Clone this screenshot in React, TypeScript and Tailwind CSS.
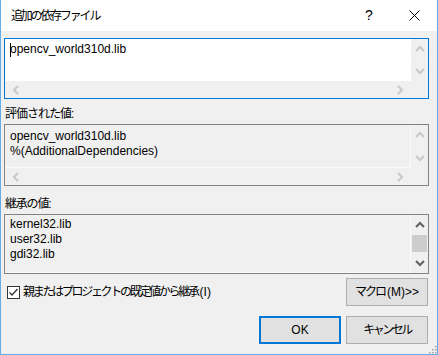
import type { ReactNode } from 'react';

const jp = "font-['Liberation_Sans','Noto_Sans_CJK_JP',sans-serif]";

function Chevron({ dir, color }: { dir: 'up' | 'down' | 'left' | 'right'; color: string }) {
  const paths: Record<string, string> = {
    up: 'M1 6 L5 2 L9 6',
    down: 'M1 2 L5 6 L9 2',
    left: 'M6 1 L2 5 L6 9',
    right: 'M2 1 L6 5 L2 9',
  };
  const vertical = dir === 'up' || dir === 'down';
  return (
    <svg width={vertical ? 10 : 8} height={vertical ? 8 : 10} viewBox={vertical ? '0 0 10 8' : '0 0 8 10'}>
      <path d={paths[dir]} fill="none" stroke={color} strokeWidth="2" />
    </svg>
  );
}

function Box({
  border,
  bg,
  lines,
  hscroll,
  arrow,
  thumb,
  pt,
  caret,
}: {
  border: string;
  bg: string;
  lines: string[];
  hscroll: boolean;
  arrow: string;
  thumb?: boolean;
  pt: string;
  caret?: boolean;
}) {
  return (
    <div className={`flex flex-col border ${border} h-full`}>
      <div className="flex flex-1 min-h-0">
        <div className={`flex-1 ${bg} ${pt} pl-[5px] text-[12px] leading-[15px] text-black font-['Liberation_Sans',sans-serif] ${bg === 'bg-white' ? '' : 'border-r border-b border-[#fafafa]'}`}>
          {lines.map((l, i) => (
            <div key={i} className="flex items-center">
              {caret && i === 0 && <span className="inline-block w-px h-[14px] bg-black -mr-px" />}
              <span>{l}</span>
            </div>
          ))}
        </div>
        <div className="w-[17px] bg-[#f0f0f0] flex flex-col items-center justify-between py-[6px]">
          <Chevron dir="up" color={arrow} />
          {thumb && <div className="w-[15px] h-[17px] bg-[#cdcdcd] -mt-[2px]" />}
          <Chevron dir="down" color={arrow} />
        </div>
      </div>
      {hscroll && (
        <div className="h-[17px] flex">
          <div className="flex-1 bg-[#f0f0f0] flex items-center justify-between px-[7px]">
            <Chevron dir="left" color={arrow} />
            <Chevron dir="right" color={arrow} />
          </div>
          <div className="w-[17px] bg-[#f0f0f0]" />
        </div>
      )}
    </div>
  );
}

function Button({ children, focused }: { children: ReactNode; focused?: boolean }) {
  return (
    <div
      className={`w-[82px] h-[28px] flex items-center justify-center bg-[#e1e1e1] text-[12px] text-black ${jp} ${
        focused ? 'border-2 border-[#0078d7]' : 'border border-[#adadad]'
      }`}
    >
      {children}
    </div>
  );
}

export default function App() {
  return (
    <div className="w-[438px] h-[355px] flex flex-col border-x border-b border-[#63ade6] bg-[#f0f0f0] overflow-hidden">
      <div className="h-[31px] bg-white flex items-center shrink-0">
        <span className={`pl-[10px] text-[12px] text-black tracking-[-2.2px] ${jp}`}>追加の依存ファイル</span>
        <div className="ml-auto flex h-full">
          <div className="w-[46px] h-full flex items-center justify-center text-[14px] text-black font-['Liberation_Sans',sans-serif]">?</div>
          <div className="w-[45px] h-full flex items-center justify-center">
            <svg width="11" height="11" viewBox="0 0 11 11">
              <path d="M0.5 0.5 L10.5 10.5 M10.5 0.5 L0.5 10.5" stroke="#000" strokeWidth="1" />
            </svg>
          </div>
        </div>
      </div>

      <div className="flex-1 flex flex-col pl-[3px] pr-[8px] relative">
        <div className="mt-[7px] h-[61px]">
          <Box border="border-[#0078d7]" bg="bg-white" lines={['opencv_world310d.lib']} hscroll arrow="#c8c8c8" pt="pt-[3px]" caret />
        </div>

        <div className={`mt-[7px] h-[16px] leading-[16px] pl-[1px] text-[12px] text-black tracking-[-1px] ${jp}`}>評価された値:</div>
        <div className="mt-[2px] h-[62px]">
          <Box border="border-[#828282]" bg="bg-[#f0f0f0]" lines={['opencv_world310d.lib', '%(AdditionalDependencies)']} hscroll arrow="#c8c8c8" pt="pt-[4px]" />
        </div>

        <div className={`mt-[10px] h-[16px] leading-[16px] pl-[1px] text-[12px] text-black tracking-[-1.2px] ${jp}`}>継承の値:</div>
        <div className="mt-[2px] h-[60px]">
          <Box border="border-[#828282]" bg="bg-[#f0f0f0]" lines={['kernel32.lib', 'user32.lib', 'gdi32.lib']} hscroll={false} arrow="#606060" thumb pt="pt-[2px]" />
        </div>

        <div className="mt-[4px] flex items-center">
          <div className="ml-[3px] w-[13px] h-[13px] border border-[#333333] bg-white flex items-center justify-center">
            <svg width="11" height="11" viewBox="0 0 11 11">
              <path d="M1.5 5.5 L4 8 L9.5 2" fill="none" stroke="#333" strokeWidth="1.3" />
            </svg>
          </div>
          <span className={`ml-[3px] text-[12px] text-black ${jp}`}>
            <span className="tracking-[-2.3px]">親またはプロジェクトの既定値から継承</span>
            <span className="ml-[2px]">(I)</span>
          </span>
          <div className="ml-auto mr-[1px]">
            <Button>
              <span className="tracking-[-2px]">マクロ</span>
              <span className="ml-[2px]">(M)&gt;&gt;</span>
            </Button>
          </div>
        </div>

        <div className="mt-[10px] flex justify-end gap-[5px] mr-[1px]">
          <Button focused>OK</Button>
          <Button>
            <span className="tracking-[-2.5px]">キャンセル</span>
          </Button>
        </div>

        <svg className="absolute right-0 bottom-0" width="10" height="10" viewBox="0 0 10 10">
          {[
            [8, 2], [8, 5], [5, 5], [8, 8], [5, 8], [2, 8],
          ].map(([x, y], i) => (
            <rect key={i} x={x} y={y} width="1.5" height="1.5" fill="#a0a0a0" />
          ))}
        </svg>
      </div>
    </div>
  );
}
